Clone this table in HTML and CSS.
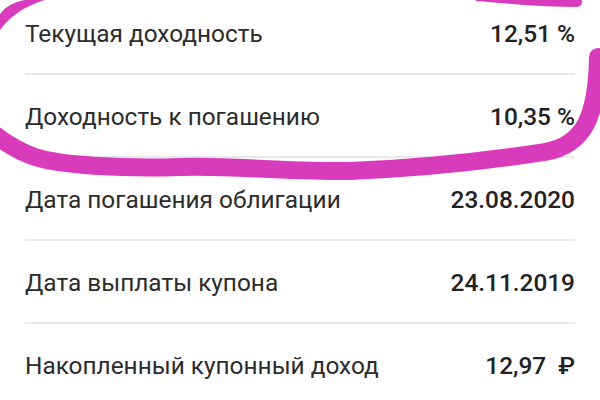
FILE: index.html
```html
<!DOCTYPE html>
<html lang="ru">
<head>
<meta charset="utf-8">
<link rel="stylesheet" href="styles.css">
</head>
<body>
<div class="page">
  <ul class="list">
    <li class="row"><span class="label">Текущая доходность</span><span class="value">12,51 %</span></li>
    <li class="row"><span class="label">Доходность к погашению</span><span class="value">10,35 %</span></li>
    <li class="row"><span class="label">Дата погашения облигации</span><span class="value">23.08.2020</span></li>
    <li class="row"><span class="label">Дата выплаты купона</span><span class="value">24.11.2019</span></li>
    <li class="row"><span class="label">Накопленный купонный доход</span><span class="value">12,97 <span class="cur">₽</span></span></li>
  </ul>
  <svg class="marker" width="600" height="400" viewBox="0 0 600 400">
    <path class="thick" d="M 598 57 C 597 115 585 145 545 152 C 480 162 420 168 350 171 C 280 172 230 165 180 167 C 120 169 60 165 35 157 C 20 152 8 145 -5 135" />
    <path class="thin" d="M 478 -4 Q 540 2 577 2" />
    <path class="blob" d="M 0 14 Q 8 2 30 -1 L 48 -1 Q 16 8 0 30 Z" />
  </svg>
</div>
</body>
</html>
```

FILE: styles.css
```css
html, body {
  margin: 0;
  padding: 0;
  background: #ffffff;
}

.page {
  position: relative;
  width: 600px;
  height: 400px;
  overflow: hidden;
  font-family: Roboto, "Noto Sans", sans-serif;
}

.list {
  list-style: none;
  margin: -8px 0 0 0;
  padding: 0 25px;
}

.row {
  display: flex;
  justify-content: space-between;
  align-items: center;
  box-sizing: border-box;
  height: 83px;
  padding-top: 1px;
  border-bottom: 2px solid #e9e9e9;
  font-size: 24.4px;
}

.label {
  color: #2c2c2c;
  font-weight: 400;
}

.value {
  color: #222222;
  font-weight: 500;
}

.cur {
  margin-left: 6px;
}

.marker {
  position: absolute;
  left: 0;
  top: 0;
  fill: none;
  stroke: #d93bbd;
  stroke-linecap: round;
  stroke-linejoin: round;
}

.marker .thin {
  stroke-width: 10;
}

.marker .thick {
  stroke-width: 18;
}

.marker .blob {
  fill: #d93bbd;
  stroke: none;
}
```
